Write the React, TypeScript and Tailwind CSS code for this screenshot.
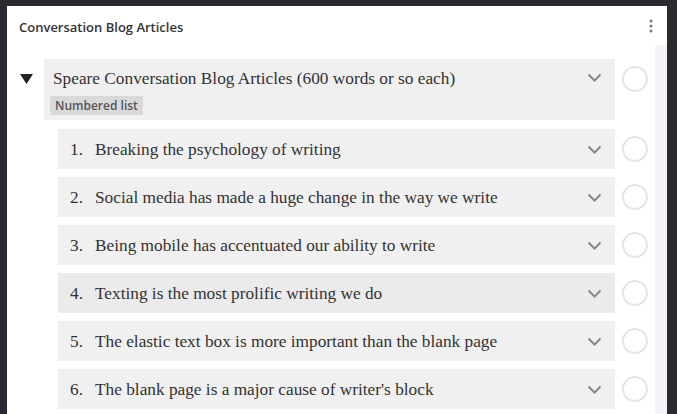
const items = [
  "Breaking the psychology of writing",
  "Social media has made a huge change in the way we write",
  "Being mobile has accentuated our ability to write",
  "Texting is the most prolific writing we do",
  "The elastic text box is more important than the blank page",
  "The blank page is a major cause of writer's block",
];

function Chevron() {
  return (
    <svg width="15" height="9" viewBox="0 0 15 9" className="flex-none">
      <path d="M1.5 1.5l6 6 6-6" fill="none" stroke="#8a8a8a" strokeWidth="2" />
    </svg>
  );
}

function Check() {
  return <span className="ml-[7px] h-[26px] w-[26px] flex-none rounded-full border-2 border-[#e4e4e4] bg-white" />;
}

export default function App() {
  return (
    <div className="h-[414px] w-[677px] overflow-hidden bg-[#292b31] pl-[7px] pr-[10px] pt-[6px]">
      <div className="relative h-full bg-white font-['Open_Sans',sans-serif]">
        <div className="flex h-[39px] items-center justify-between pl-3 pr-[14px]">
          <span className="pt-[5px] text-[13px] font-semibold text-[#333]">Conversation Blog Articles</span>
          <svg width="4" height="14" viewBox="0 0 4 14">
            <circle cx="2" cy="2" r="1.5" fill="#777" />
            <circle cx="2" cy="7" r="1.5" fill="#777" />
            <circle cx="2" cy="12" r="1.5" fill="#777" />
          </svg>
        </div>
        <div className="flex">
          <div className="flex-1 pl-[12px] pr-[7px] pt-[14px]">
            <div className="flex items-start">
              <svg width="13" height="10" viewBox="0 0 13 10" className="ml-[1px] mt-[15px] flex-none">
                <path d="M0 0h13L6.5 10z" fill="#222" />
              </svg>
              <div className="ml-[11px] flex h-[61px] min-w-0 flex-1 flex-col bg-[#f0f0f0] pl-[9px] pr-[13px]">
                <div className="flex h-[37px] items-center justify-between">
                  <span className="pt-[3px] font-['Liberation_Serif',serif] text-[17.3px] text-[#333]">
                    Speare Conversation Blog Articles (600 words or so each)
                  </span>
                  <Chevron />
                </div>
                <span className="-ml-[3px] w-fit bg-[#d9d9d9] px-[5px] text-[12px] font-semibold leading-[19px] text-[#555]">
                  Numbered list
                </span>
              </div>
              <div className="mt-[7px] flex flex-none"><Check /></div>
            </div>
            <div className="mt-[9px] flex flex-col gap-[8px] pl-[39px]">
              {items.map((t, i) => (
                <div key={i} className="flex items-center">
                  <div className={`flex h-[40px] min-w-0 flex-1 items-center justify-between pl-[12px] pr-[13px] ${i === 3 ? "bg-[#ebebeb]" : "bg-[#f0f0f0]"}`}>
                    <span className="flex pt-[2px] font-['Liberation_Serif',serif] text-[17.3px] text-[#333]">
                      <span className="w-[25px]">{i + 1}.</span>
                      {t}
                    </span>
                    <Chevron />
                  </div>
                  <Check />
                </div>
              ))}
            </div>
          </div>
          <div className="h-[400px] w-[12px] bg-[#f3f4f6]" />
        </div>
      </div>
    </div>
  );
}
